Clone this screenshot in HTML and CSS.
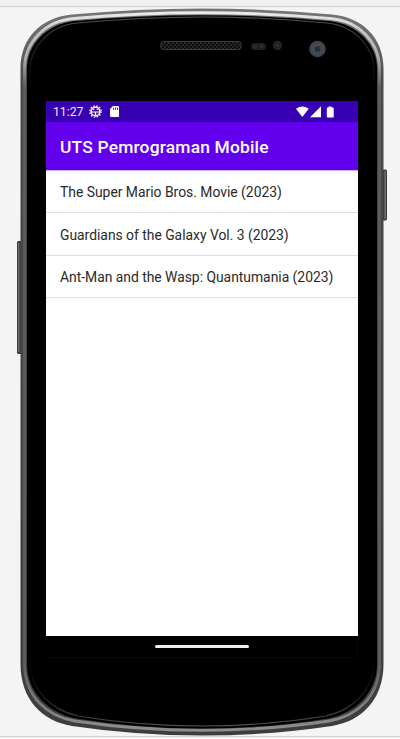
FILE: index.html
```html
<!DOCTYPE html>
<html lang="id">
<head>
<meta charset="utf-8">
<title>UTS Pemrograman Mobile</title>
<link rel="stylesheet" href="styles.css">
</head>
<body>
<main class="stage">
  <svg class="device" viewBox="0 0 400 739" aria-hidden="true">
    <defs>
      <linearGradient id="rim" x1="0" y1="8" x2="0" y2="735" gradientUnits="userSpaceOnUse">
        <stop offset="0" stop-color="#777"/><stop offset=".05" stop-color="#656565"/><stop offset=".1" stop-color="#484a49"/><stop offset="1" stop-color="#3d3d3d"/>
      </linearGradient>
      <linearGradient id="shine" x1="0" y1="8" x2="0" y2="735" gradientUnits="userSpaceOnUse">
        <stop offset="0" stop-color="#f4f4f4"/><stop offset=".03" stop-color="#c8c8c8"/><stop offset=".07" stop-color="#aaa"/><stop offset=".11" stop-color="#5c5e5d"/><stop offset=".9" stop-color="#5c5e5d"/><stop offset="1" stop-color="#929292"/>
      </linearGradient>
      <linearGradient id="lip" x1="0" y1="14" x2="0" y2="728" gradientUnits="userSpaceOnUse">
        <stop offset="0" stop-color="#555"/><stop offset=".06" stop-color="#222"/><stop offset=".1" stop-color="#000"/><stop offset=".9" stop-color="#000"/><stop offset=".96" stop-color="#222"/><stop offset="1" stop-color="#555"/>
      </linearGradient>
      <pattern id="mesh" width="4" height="4" patternUnits="userSpaceOnUse">
        <rect width="4" height="4" fill="#232625"/><circle cx="1" cy="1" r="1" fill="#050505"/><circle cx="3" cy="3" r="1" fill="#050505"/>
      </pattern>
    </defs>
    <rect width="400" height="6" fill="#f1f1f1"/>
    <path d="M0 6.500H400" stroke="#cfcfcf"/>
    <path d="M0 736.500H400" stroke="#cfcfcf"/>
    <rect x="17" y="241" width="6" height="113" rx="1.500" fill="#383a39"/>
    <path d="M18.700 243V352" stroke="#696b6a" stroke-width="1.500"/>
    <rect x="381" y="169.500" width="6" height="51" rx="1.500" fill="#383a39"/>
    <path d="M385.200 171V219" stroke="#737373" stroke-width="1.500"/>
    <path fill="url(#rim)" d="M20.500 68C20.500 38 42 17 72 14.500Q137 8.500 202 8.500T332 14.500C362 17 383.500 38 383.500 68V664C383.500 699 362 721 332 726Q268 735.500 202 735.500T72 726C42 721 20.500 699 20.500 664Z"/>
    <path fill="none" stroke="url(#shine)" stroke-width="2.900" d="M24.500 68C25 43 44 21 74 18.500Q138 12.800 202 12.800T330 18.500C360 21 379 43 379.500 68V664C379 696 358 716 329 721Q267 730.300 202 730.300T75 721C46 716 25 696 24.500 664Z"/>
    <path fill="#000" d="M27 68C27 46 45 24 75 21Q139 15.300 202 15.300T329 21C359 24 377 46 377 68V664C377 692 356 713 328 718.500Q266 728.500 202 728.500T76 718.500C48 713 27 692 27 664Z"/>
    <path fill="none" stroke="url(#lip)" stroke-width="1.100" d="M30 68C31 49 47 26 77 23Q140 17 202 17T327 23C357 26 373 49 374 68V664C373 690 353 710 326 716Q265 726 202 726T78 716C51 710 31 690 30 664Z"/>
    <rect x="160.700" y="41.500" width="80.500" height="8" rx="3" fill="url(#mesh)" stroke="#3b3e3d"/>
    <rect x="251" y="43" width="15" height="7" rx="3.500" fill="#202020"/>
    <circle cx="255" cy="46.500" r="2" fill="#2d2d2d"/><circle cx="262" cy="46.500" r="2" fill="#2d2d2d"/>
    <circle cx="277.500" cy="45.500" r="4.700" fill="#222"/><circle cx="277.500" cy="45.500" r="1.800" fill="#303030"/>
    <circle cx="317.500" cy="49" r="8.300" fill="#3e444c"/><circle cx="317.500" cy="49" r="6" fill="#454b54"/><circle cx="317.500" cy="49" r="2.900" fill="#2a3039"/>
  </svg>
  <section class="screen">
    <header class="status">
      <span class="clock">11:27</span>
      <svg class="bug" viewBox="0 0 13 13"><circle cx="6.500" cy="6.500" r="5.600" fill="none" stroke="#fff" stroke-width="1.400" stroke-dasharray="1.500 1.430"/><circle cx="6.500" cy="6.500" r="4.300" fill="none" stroke="#fff" stroke-width="1.500"/><path d="M2 7H11M6.500 7V11M4 4.500H5.300M7.700 4.500H9" stroke="#fff" stroke-width="1.200"/></svg>
      <svg class="card" viewBox="0 0 9 11"><path fill="#fff" d="M3 0H8Q9 0 9 1V10Q9 11 8 11H1Q0 11 0 10V3Z"/><path d="M3.500 1.500V4M5.500 1.500V4M7.500 1.500V4" stroke="#3700b3" stroke-width=".8"/></svg>
      <svg class="signals" viewBox="0 0 39 12"><path fill="#fff" d="M0 2.800Q6.300-1.600 12.700 2.800L6.350 11Z"/><path fill="#fff" d="M14 11.300L25 .3V11.300ZM32.500.5H35.500V1.500H37Q37.700 1.500 37.700 2.200V10.800Q37.700 11.500 37 11.500H31.500Q30.800 11.500 30.800 10.800V2.200Q30.800 1.500 31.500 1.500H32.500Z"/></svg>
    </header>
    <h1 class="appbar">UTS Pemrograman Mobile</h1>
    <ul class="movies">
      <li class="movie">The Super Mario Bros. Movie (2023)</li>
      <li class="movie middle">Guardians of the Galaxy Vol. 3 (2023)</li>
      <li class="movie last">Ant-Man and the Wasp: Quantumania (2023)</li>
    </ul>
    <footer class="nav"><div class="handle"></div></footer>
  </section>
</main>
</body>
</html>
```
FILE: styles.css
```css
* { box-sizing: border-box; }
body { margin: 0; background: #f4f4f4; font-family: Roboto, sans-serif; }
.stage { display: grid; width: 400px; height: 739px; overflow: hidden; }
.device { grid-area: 1 / 1; width: 400px; height: 739px; display: block; }
.screen { grid-area: 1 / 1; z-index: 1; margin: 101px 0 0 46px; width: 312px; height: 557px; display: flex; flex-direction: column; background: #fff; }
.status { height: 21px; flex: none; display: flex; align-items: center; padding: 0 23px 0 7px; background: #3700b3; color: #fff; }
.clock { width: 31px; padding-top: 1px; font-size: 12.2px; line-height: 21px; white-space: nowrap; color: #eee6fb; }
.bug { width: 13px; height: 13px; margin-left: 5px; }
.card { width: 9px; height: 11px; margin-left: 8px; }
.signals { width: 39px; height: 12px; margin-left: auto; }
.appbar { height: 48px; flex: none; display: flex; align-items: center; margin: 0; padding: 2px 14px 0; background: #6200ee; color: #fff; font-size: 17.4px; font-weight: 500; letter-spacing: .19px; white-space: nowrap; }
.movies { flex: 1; margin: 0; padding: 0; list-style: none; background: linear-gradient(#c5b8d6 0 1px, #f7f7f7 1px, #fff 5px); }
.movie { display: flex; align-items: center; height: 43px; padding: 2px 14px 0; border-bottom: 1px solid #dedede; color: #2a2a2a; font-size: 13.9px; letter-spacing: -.01px; white-space: nowrap; }
.middle { padding-top: 1px; letter-spacing: -.02px; }
.last { height: 42px; padding-top: 0; letter-spacing: -.02px; }
.nav { height: 22px; flex: none; display: flex; justify-content: center; padding-top: 9px; background: #000; border: solid #000f0a; border-width: 0 1px 1px 0; }
.handle { width: 94px; height: 3px; border-radius: 1.5px; background: #eee; }
```
